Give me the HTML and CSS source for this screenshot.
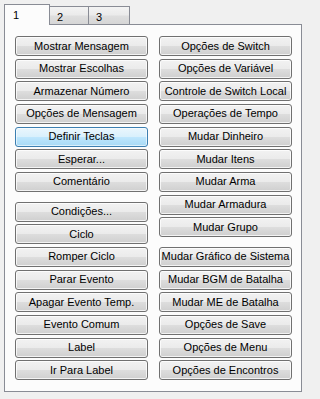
FILE: index.html
```html
<!DOCTYPE html>
<html>
<head>
<meta charset="utf-8">
<link rel="stylesheet" href="styles.css">
</head>
<body>
<div class="window">
  <div class="tabstrip">
    <div class="tab active">1</div>
    <div class="tab">2</div>
    <div class="tab last">3</div>
    <div class="tab-fill"></div>
  </div>
  <div class="panel">
    <div class="col">
      <button class="btn">Mostrar Mensagem</button>
      <button class="btn">Mostrar Escolhas</button>
      <button class="btn">Armazenar Número</button>
      <button class="btn">Opções de Mensagem</button>
      <button class="btn focus">Definir Teclas</button>
      <button class="btn">Esperar...</button>
      <button class="btn">Comentário</button>
      <button class="btn group">Condições...</button>
      <button class="btn">Ciclo</button>
      <button class="btn">Romper Ciclo</button>
      <button class="btn">Parar Evento</button>
      <button class="btn">Apagar Evento Temp.</button>
      <button class="btn">Evento Comum</button>
      <button class="btn">Label</button>
      <button class="btn">Ir Para Label</button>
    </div>
    <div class="col">
      <button class="btn">Opções de Switch</button>
      <button class="btn">Opções de Variável</button>
      <button class="btn">Controle de Switch Local</button>
      <button class="btn">Operações de Tempo</button>
      <button class="btn">Mudar Dinheiro</button>
      <button class="btn">Mudar Itens</button>
      <button class="btn">Mudar Arma</button>
      <button class="btn">Mudar Armadura</button>
      <button class="btn">Mudar Grupo</button>
      <button class="btn group">Mudar Gráfico de Sistema</button>
      <button class="btn">Mudar BGM de Batalha</button>
      <button class="btn">Mudar ME de Batalha</button>
      <button class="btn">Opções de Save</button>
      <button class="btn">Opções de Menu</button>
      <button class="btn">Opções de Encontros</button>
    </div>
  </div>
</div>
</body>
</html>
```

FILE: styles.css
```css
html, body {
  margin: 0;
  padding: 0;
  background: #f0f0f0;
}
body {
  width: 306px;
  height: 399px;
  overflow: hidden;
  font-family: "Liberation Sans", Arial, sans-serif;
  font-size: 11px;
  color: #000;
}
.window {
  padding: 4px 0 0 4px;
  width: 298px;
}
.tabstrip {
  display: flex;
  align-items: flex-end;
  height: 21px;
}
.tab {
  box-sizing: border-box;
  height: 19px;
  width: 39px;
  border-top: 1px solid #898c95;
  border-right: 1px solid #898c95;
  border-bottom: 1px solid #898c95;
  background: linear-gradient(#f3f3f3 0%, #ebebeb 45%, #dedede 55%, #d6d6d6 100%);
  padding: 5px 0 0 7px;
  line-height: 11px;
}
.tab.last {
  width: 41px;
}
.tab.active {
  height: 21px;
  width: 46px;
  border-left: 1px solid #898c95;
  border-bottom: none;
  background: #fcfcfc;
  padding: 5px 0 0 8px;
}
.tab-fill {
  flex: 1;
  height: 1px;
  background: #898c95;
}
.panel {
  box-sizing: border-box;
  height: 367px;
  border: 1px solid #898c95;
  border-top: none;
  background: #fcfcfc;
  padding: 11px 9px 0 10px;
  display: flex;
  gap: 11px;
}
.col {
  display: flex;
  flex-direction: column;
  gap: 2.67px;
  width: 133px;
}
.btn {
  box-sizing: border-box;
  height: 20px;
  width: 133px;
  margin: 0;
  padding: 0;
  border: 1px solid #707070;
  border-radius: 3px;
  background: linear-gradient(#f2f2f2 0%, #ebebeb 48%, #dddddd 52%, #cfcfcf 100%);
  box-shadow: inset 0 0 0 1px rgba(255,255,255,0.75);
  font-family: "Liberation Sans", Arial, sans-serif;
  font-size: 11px;
  color: #000;
  white-space: nowrap;
  line-height: 17px;
  text-align: center;
}
.btn.group {
  margin-top: 7px;
}
.btn.focus {
  border-color: #3c7fb1;
  background: linear-gradient(#eaf6fd 0%, #d9f0fc 48%, #bee6fd 52%, #a7d9f5 100%);
  box-shadow: inset 0 0 0 1px rgba(255,255,255,0.6);
}
```
